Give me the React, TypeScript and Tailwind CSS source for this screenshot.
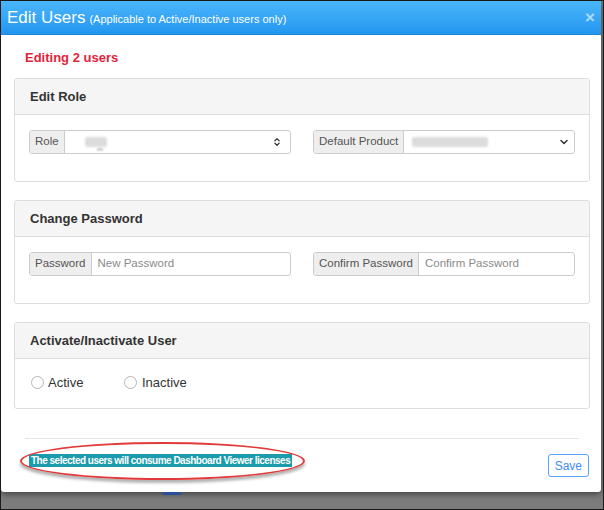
import { ChevronDown, ChevronsUpDown } from "lucide-react"

function Addon({ label }: { label: string }) {
  return (
    <span className="flex items-center px-[5px] h-full whitespace-nowrap bg-[#eeeeee] border-r border-[#cccccc] text-[11.5px] text-[#555555]">
      {label}
    </span>
  )
}

function Panel({ title, children, bodyClass }: { title: string; children: React.ReactNode; bodyClass: string }) {
  return (
    <div className="w-[576px] border border-[#dddddd] rounded-[3px] bg-white">
      <div className="h-[36px] flex items-center px-[15px] bg-[#f5f5f5] border-b border-[#dddddd] rounded-t-[3px]">
        <span className="text-[13px] font-bold text-[#333333]">{title}</span>
      </div>
      <div className={bodyClass}>{children}</div>
    </div>
  )
}

export default function App() {
  return (
    <div
      className="w-[604px] h-[510px] border border-[#1a1a1a] bg-[#7c7c7c] overflow-hidden"
      style={{ fontFamily: '"Liberation Sans", Arial, sans-serif' }}
    >
      {/* Modal */}
      <div className="w-[600px] h-[491px] bg-white rounded-b-[3px] shadow-[0_2px_6px_rgba(0,0,0,0.5)] flex flex-col">
        {/* Header */}
        <div className="h-[34px] shrink-0 flex items-center justify-between pl-[6px] pr-[6px] bg-gradient-to-b from-[#4ab6fa] to-[#2196f0] border-b border-[#1c86d8]">
          <div className="flex items-baseline gap-[4px] text-white">
            <span className="text-[17px] leading-none">Edit Users</span>
            <span className="text-[11px] leading-none">(Applicable to Active/Inactive users only)</span>
          </div>
          <span className="text-[17px] font-bold leading-none text-white/60">×</span>
        </div>

        {/* Body */}
        <div className="pl-[13px] pt-[15px] flex flex-col">
          <div className="pl-[11px] text-[13px] font-bold text-[#e2233b] leading-[16px]">Editing 2 users</div>

          <div className="mt-[12px] flex flex-col gap-[18px]">
            <Panel title="Edit Role" bodyClass="h-[66px] px-[14px] pt-[15px] grid grid-cols-2 gap-[22px]">
              <div className="h-[24px] flex border border-[#cccccc] rounded-[3px] overflow-hidden">
                <Addon label="Role" />
                <div className="flex-1 flex items-center justify-between pl-[20px] pr-[8px]">
                  <span className="relative w-[22px] h-[10px] bg-[#dcdcdc] rounded-[2px] blur-[1px]">
                    <span className="absolute left-[12px] bottom-[-3px] w-[6px] h-[1px] bg-[#777777]" />
                  </span>
                  <ChevronsUpDown className="w-[10px] h-[10px] text-[#333333]" strokeWidth={3} />
                </div>
              </div>
              <div className="h-[24px] flex border border-[#cccccc] rounded-[3px] overflow-hidden">
                <Addon label="Default Product" />
                <div className="flex-1 flex items-center justify-between pl-[8px] pr-[4px]">
                  <span className="w-[76px] h-[10px] bg-[#dcdcdc] rounded-[2px] blur-[1px]" />
                  <ChevronDown className="w-[12px] h-[12px] text-[#333333]" strokeWidth={3} />
                </div>
              </div>
            </Panel>

            <Panel title="Change Password" bodyClass="h-[66px] px-[14px] pt-[15px] grid grid-cols-2 gap-[22px]">
              <div className="h-[24px] flex border border-[#cccccc] rounded-[3px] overflow-hidden">
                <Addon label="Password" />
                <span className="flex-1 flex items-center pl-[6px] text-[11.5px] text-[#8a8a8a]">New Password</span>
              </div>
              <div className="h-[24px] flex border border-[#cccccc] rounded-[3px] overflow-hidden">
                <Addon label="Confirm Password" />
                <span className="flex-1 flex items-center pl-[6px] text-[11.5px] text-[#8a8a8a]">Confirm Password</span>
              </div>
            </Panel>

            <Panel title="Activate/Inactivate User" bodyClass="h-[49px] px-[16px] pb-[2px] flex items-center gap-[16px]">
              <label className="w-[77px] flex items-center gap-[4px] text-[13px] text-[#333333]">
                <span className="w-[13px] h-[13px] rounded-full border border-[#b5b5b5]" />
                Active
              </label>
              <label className="flex items-center gap-[5px] text-[13px] text-[#333333]">
                <span className="w-[13px] h-[13px] rounded-full border border-[#b5b5b5]" />
                Inactive
              </label>
            </Panel>
          </div>

          {/* Footer */}
          <div className="mt-[29px] ml-[11px] w-[554px] border-t border-[#e5e5e5]" />
          <div className="mt-[15px] pl-[15px] pr-[12px] flex items-start justify-between">
            <div className="relative">
              <span className="block px-[2px] leading-[13px] bg-[#1b9bab] text-[10px] font-bold text-white tracking-[-0.5px]">
                The selected users will consume Dashboard Viewer licenses
              </span>
              <span className="absolute left-[-9px] right-[-13px] top-[-12px] bottom-[-13px] rounded-[50%] border-2 border-[#e23a3a] shadow-[0_3px_3px_rgba(0,0,0,0.3)]" />
            </div>
            <button className="h-[23px] px-[6px] border border-[#5aa3ff] rounded-[3px] text-[12px] text-[#3d8bfd] bg-white">
              Save
            </button>
          </div>
        </div>
      </div>

      {/* Backdrop remnants of page behind */}
      <div className="ml-[162px] flex">
        <div className="w-[18px] h-[3px] bg-[#2a4f99]" />
      </div>
    </div>
  )
}
